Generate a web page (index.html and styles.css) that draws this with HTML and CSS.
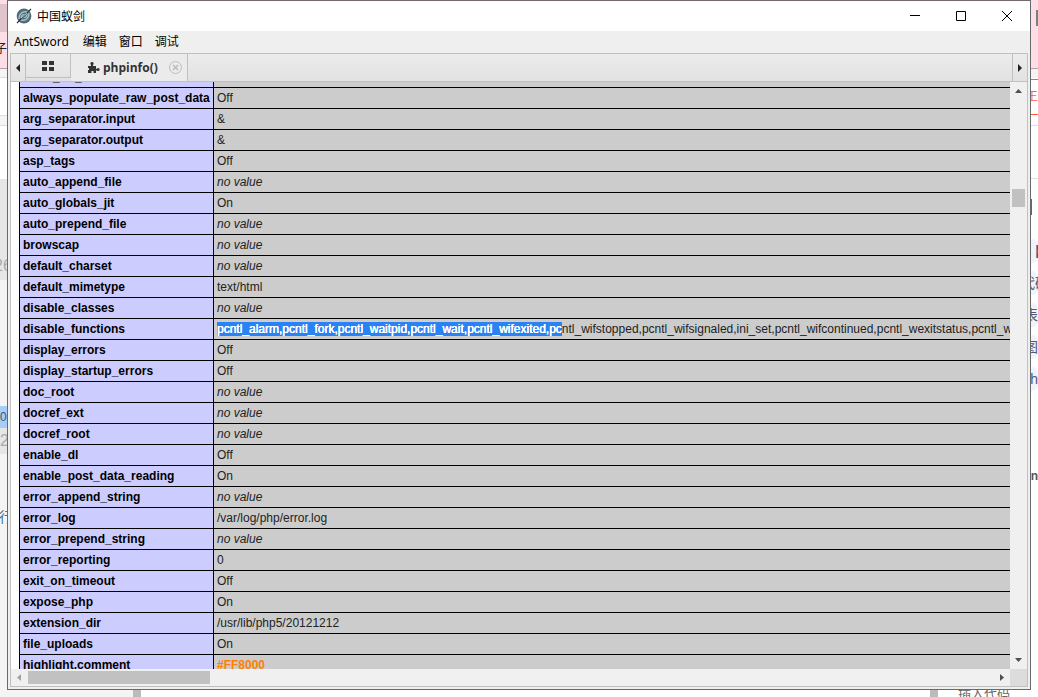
FILE: index.html
```html
<!DOCTYPE html>
<html lang="zh-CN">
<head>
<meta charset="utf-8">
<title>中国蚁剑</title>
<link rel="stylesheet" href="styles.css">
</head>
<body>
<div class="desktop">
  <div class="behind left" aria-hidden="true">
    <span class="band rose"></span><span class="band toolbar"></span><span class="band pink">子</span><span class="band tabs"></span><span class="band blank"></span><span class="band strip"></span><span class="band blank low"></span>
    <span class="band gutter num">26</span><span class="band pale"></span><span class="band chosen">0</span><span class="band gutter second">2</span><span class="band pale gap"></span><span class="band link">行</span>
  </div>
  <main class="window">
    <header class="titlebar">
      <svg class="logo" viewBox="0 0 16 16"><circle cx="8" cy="8" r="7.4" fill="#4f6e7d"/><path d="M3 11C3 5 7 3 12 4L10 7C7 6 5 7 5 10M13 5c0 6-4 8-8 7l2-3c3 1 4-1 4-3" fill="none" stroke="#a9bcc4" stroke-width="1.3"/><path d="M1 15L15 1" stroke="#263b47" stroke-width="1.3"/><path d="M5 10L11 5" stroke="#dfe7ea" stroke-width=".8"/></svg>
      <h1>中国蚁剑</h1>
      <button aria-label="最小化"><svg viewBox="0 0 10 10"><path d="M0 4.500H10"/></svg></button>
      <button aria-label="最大化"><svg viewBox="0 0 10 10"><path d="M.5.5h9v9h-9z"/></svg></button>
      <button aria-label="关闭"><svg viewBox="0 0 10 10"><path d="M0 0L10 10M10 0L0 10"/></svg></button>
    </header>
    <nav class="menu"><button>AntSword</button><button>编辑</button><button>窗口</button><button>调试</button></nav>
    <section class="panel">
      <div class="tabbar">
        <button class="step" aria-label="向左"><svg viewBox="0 0 4 8"><path d="M4 0v8L0 4z"/></svg></button>
        <button class="tab home" aria-label="主页"><svg viewBox="0 0 12 10"><path d="M0 0h5v4H0zM7 0h5v4H7zM0 6h5v4H0zM7 6h5v4H7z"/></svg></button>
        <div class="tab active">
          <svg class="plug" viewBox="0 0 12 11"><path d="M0 4h3V3C2 2 2 0 4 0s2 2 1 3v1h3v3c1 0 1-1 2.500-1s1.500 3 0 3S9 8.500 8 8.500V11H5.500V9h-2v2H0V8h1V6H0z"/></svg>
          <span>phpinfo()</span>
          <button aria-label="关闭标签"><svg viewBox="0 0 13 13"><circle cx="6.500" cy="6.500" r="6"/><path d="M4 4l5 5M9 4L4 9" stroke-width="1.600"/></svg></button>
        </div>
        <button class="step right" aria-label="向右"><svg viewBox="0 0 4 8"><path d="M0 0v8l4-4z"/></svg></button>
      </div>
      <div class="view">
        <div class="page">
          <table>
            <tr><th>allow_url_include</th><td>Off</td></tr>
            <tr><th>always_populate_raw_post_data</th><td>Off</td></tr>
            <tr><th>arg_separator.input</th><td>&amp;</td></tr>
            <tr><th>arg_separator.output</th><td>&amp;</td></tr>
            <tr><th>asp_tags</th><td>Off</td></tr>
            <tr><th>auto_append_file</th><td><i>no value</i></td></tr>
            <tr><th>auto_globals_jit</th><td>On</td></tr>
            <tr><th>auto_prepend_file</th><td><i>no value</i></td></tr>
            <tr><th>browscap</th><td><i>no value</i></td></tr>
            <tr><th>default_charset</th><td><i>no value</i></td></tr>
            <tr><th>default_mimetype</th><td>text/html</td></tr>
            <tr><th>disable_classes</th><td><i>no value</i></td></tr>
            <tr><th>disable_functions</th><td><mark>pcntl_alarm,pcntl_fork,pcntl_waitpid,pcntl_wait,pcntl_wifexited,pc</mark>ntl_wifstopped,pcntl_wifsignaled,ini_set,pcntl_wifcontinued,pcntl_wexitstatus,pcntl_wtermsig</td></tr>
            <tr><th>display_errors</th><td>Off</td></tr>
            <tr><th>display_startup_errors</th><td>Off</td></tr>
            <tr><th>doc_root</th><td><i>no value</i></td></tr>
            <tr><th>docref_ext</th><td><i>no value</i></td></tr>
            <tr><th>docref_root</th><td><i>no value</i></td></tr>
            <tr><th>enable_dl</th><td>Off</td></tr>
            <tr><th>enable_post_data_reading</th><td>On</td></tr>
            <tr><th>error_append_string</th><td><i>no value</i></td></tr>
            <tr><th>error_log</th><td>/var/log/php/error.log</td></tr>
            <tr><th>error_prepend_string</th><td><i>no value</i></td></tr>
            <tr><th>error_reporting</th><td>0</td></tr>
            <tr><th>exit_on_timeout</th><td>Off</td></tr>
            <tr><th>expose_php</th><td>On</td></tr>
            <tr><th>extension_dir</th><td>/usr/lib/php5/20121212</td></tr>
            <tr><th>file_uploads</th><td>On</td></tr>
            <tr><th>highlight.comment</th><td class="orange">#FF8000</td></tr>
          </table>
        </div>
        <div class="vbar"><svg viewBox="0 0 7 4"><path d="M0 4h7L3.500 0z"/></svg><span class="thumb"></span><svg viewBox="0 0 7 4"><path d="M0 0h7L3.500 4z"/></svg></div>
        <div class="hbar"><svg class="dim" viewBox="0 0 4 7"><path d="M4 0v7L0 3.500z"/></svg><span class="thumb"></span><svg viewBox="0 0 4 7"><path d="M0 0v7l4-3.500z"/></svg></div>
        <div class="corner"></div>
      </div>
    </section>
  </main>
  <div class="behind side" aria-hidden="true">
    <span class="band pinktop"><b></b></span><span class="band tabs"></span><span class="band redbox">王</span><span class="band underline"></span><span class="band teal"></span><span class="band chip inset">【</span><span class="band chip pair">代码</span><span class="band chip">表</span><span class="band chip">图</span><span class="band chip">h</span><span class="band tail">n</span>
  </div>
  <footer class="behind bottom" aria-hidden="true"><span class="foot-left"></span><span class="foot-bar"></span><span class="foot-mid"></span><span class="foot-bar"></span><span class="foot-text">插入代码</span></footer>
</div>
</body>
</html>
```
FILE: styles.css
```css
* { box-sizing: border-box; }
body { margin: 0; font-family: "Liberation Sans", "Noto Sans CJK SC", sans-serif; font-size: 12px; color: #222; }
button { border: 0; padding: 0; background: none; font: inherit; color: inherit; }
svg { display: block; flex: none; }
.desktop { display: grid; grid-template: minmax(0, 1fr) 7px / 7px minmax(0, 1fr) 7px; height: 100vh; overflow: hidden; background: #fff; }

.window { display: flex; flex-direction: column; min-width: 0; min-height: 0; border: 1px solid #696969; border-top-color: #756a70; background: #efefef; }
.titlebar { display: flex; align-items: center; height: 30px; flex: none; padding-left: 8px; background: #fff; color: #000; }
.logo { width: 16px; height: 16px; }
.titlebar h1 { flex: 1; margin: 0 0 0 5px; font: 12px/18px "Noto Sans CJK SC", sans-serif; }
.titlebar button { display: grid; place-items: center; width: 46px; height: 30px; }
.titlebar button svg { width: 10px; height: 10px; fill: none; stroke: #000; }
.menu { display: flex; gap: 12px; height: 22px; flex: none; padding-left: 6px; color: #000; font: 12px/22px "Noto Sans", "Noto Sans CJK SC", sans-serif; }
.menu button:first-child { margin-right: 2px; }

.panel { display: flex; flex: 1; flex-direction: column; min-height: 0; margin: 0 2px 2px; border: 1px solid #c0c0c0; }
.tabbar { display: flex; height: 28px; flex: none; border-bottom: 1px solid #c0c0c0; background: linear-gradient(#ececec, #e2e2e2); }
.step { display: grid; place-items: center; width: 15px; border-right: 1px solid #c0c0c0; }
.step svg { width: 4px; height: 8px; fill: #222; }
.step.right { margin-left: auto; border-right: 0; border-left: 1px solid #c0c0c0; }
.tab { display: flex; align-items: center; justify-content: center; height: 24px; border-right: 1px solid #c0c0c0; border-bottom: 1px solid #c0c0c0; fill: #333; }
.home { width: 45px; }
.home svg { width: 12px; height: 10px; }
.active { height: 27px; gap: 4px; padding: 0 5px 0 17px; border-bottom: 0; background: #ebebeb; color: #333; font: bold 12px/24px "Open Sans", sans-serif; }
.active span { margin-left: -1px; margin-right: 1px; }
.plug { width: 12px; height: 11px; }
.active button { margin-left: 6px; }
.active button svg { width: 13px; height: 13px; fill: none; stroke: #bdbdbd; }

.view { display: grid; flex: 1; grid-template: minmax(0, 1fr) 17px / minmax(0, 1fr) 17px; min-height: 0; background: #fff; }
.page { overflow: hidden; padding-left: 8px; }
table { margin-top: -16px; border-collapse: collapse; background: #ccc; white-space: nowrap; color: #222; }
th, td { height: 21px; padding: 0 3px; border: 1px solid #000; line-height: 14px; text-align: left; }
th { min-width: 194px; background: #ccf; color: #000; }
mark { display: inline-block; background: #2a83f5; color: #fff; text-shadow: 0 0 #fff, 0 0 #fff; }
.orange { color: #ff8000; font-weight: bold; }
.vbar, .hbar { display: flex; align-items: center; background: #f0f0f0; fill: #505050; }
.vbar { flex-direction: column; padding: 7px 0 7px; }
.vbar svg { width: 7px; height: 4px; }
.vbar .thumb { width: 13px; height: 18px; margin-top: 96px; }
.hbar { padding: 0 6px; }
.hbar svg { width: 4px; height: 7px; }
.hbar .thumb { width: 182px; height: 13px; margin-left: 7px; }
.thumb { background: #c1c1c1; }
.thumb + svg { margin-top: auto; }
.hbar .thumb + svg { margin: 0 0 0 auto; }
.dim { fill: #a3a3a3; }
.corner { background: #dcdcdc; }

.behind { display: flex; overflow: hidden; white-space: nowrap; }
.left, .side { flex-direction: column; }
.band { flex: none; overflow: hidden; }
.left { background: #f4f4f4; }
.rose { height: 4px; background: #fddde6; }
.toolbar { height: 28px; background: #dfc4cb; }
.pink { height: 36px; background: #fddde6; line-height: 34px; direction: rtl; }
.tabs { height: 10px; border-top: 1px solid #b5a0a8; background: #f4f4f4; }
.left .tabs { border-bottom: 1px solid #ddd; }
.blank { height: 37px; background: #fff; }
.strip { height: 11px; border: solid #ddd; border-width: 1px 0; background: #f4f4f4; }
.blank.low { height: 53px; }
.gutter { height: 101px; padding-top: 77px; background: #e6e6e6; color: #aaa; font-size: 16px; line-height: 20px; }
.num { text-indent: -6px; }
.pale { height: 126px; }
.chosen { height: 22px; background: #a8ccf8; color: #456; line-height: 22px; }
.gutter.second { height: 26px; padding-top: 3px; }
.pale.gap { height: 54px; }
.link { color: #3875a8; font-size: 14px; line-height: 18px; text-indent: -1px; }
.side { background: #fff; }
.pinktop { height: 68px; padding: 10px 0 0 5px; background: #fddde6; }
.pinktop b { display: block; height: 16px; background: #788276; }
.redbox { height: 36px; margin-top: 1px; border: solid #ff5a36; border-width: 1px 0; color: #f63; direction: rtl; line-height: 34px; }
.underline { height: 54px; margin-top: 10px; border: solid #ddd; border-width: 1px 0; }
.teal { width: 1px; height: 16px; margin: 20px 0 24px; background: #39758a; }
.chip { height: 24px; margin-bottom: 8px; border-radius: 0 6px 6px 0; background: #eff4fb; color: #557; direction: rtl; font-size: 14px; line-height: 24px; }
.chip.inset { direction: ltr; text-indent: -4px; }
.chip.pair { direction: ltr; text-indent: -10px; }
.tail { height: 90px; padding-top: 70px; color: #555; direction: rtl; font-weight: bold; line-height: 14px; }
.bottom { grid-column: 1 / -1; }
.foot-left { width: 133px; background: #f4f4f4; }
.foot-bar { width: 8px; background: #bbb; }
.foot-mid { flex: 1; }
.foot-text { width: 100px; padding-left: 20px; color: #666; font-size: 13px; line-height: 8px; }
```
